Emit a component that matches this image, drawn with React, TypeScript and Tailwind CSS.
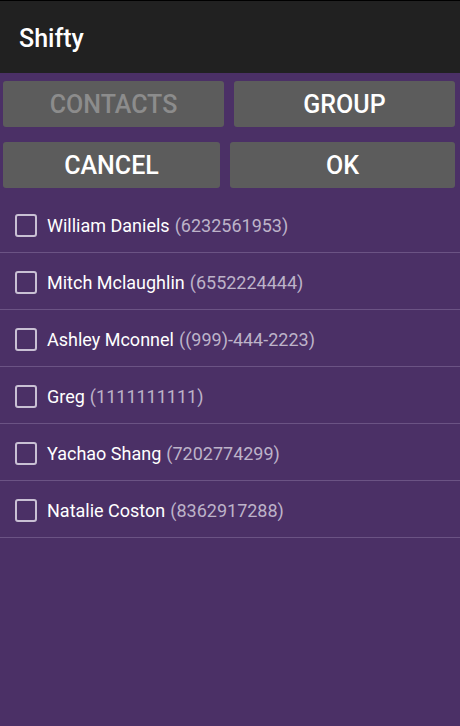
import React from "react";

const contacts = [
  { name: "William Daniels", phone: "6232561953" },
  { name: "Mitch Mclaughlin", phone: "6552224444" },
  { name: "Ashley Mconnel", phone: "(999)-444-2223" },
  { name: "Greg", phone: "1111111111" },
  { name: "Yachao Shang", phone: "7202774299" },
  { name: "Natalie Coston", phone: "8362917288" },
];

export default function App() {
  return (
    <div
      className="w-[460px] h-[726px] bg-[#4b3066] flex flex-col overflow-hidden"
      style={{ fontFamily: "Roboto, 'Liberation Sans', sans-serif" }}
    >
      <div className="h-[73px] bg-[#212121] border-t border-black flex items-center px-[19px]">
        <h1 className="text-[25px] text-white font-medium pt-[4px]">Shifty</h1>
      </div>
      <div className="flex justify-between pl-[3px] pr-[5px] mt-[8px]">
        <button className="w-[221px] h-[46px] rounded-[3px] bg-[#5c5c5c] text-[#8c8c8c] text-[25px] font-medium pt-[2px]">
          CONTACTS
        </button>
        <button className="w-[221px] h-[46px] rounded-[3px] bg-[#5c5c5c] text-white text-[25px] font-medium pt-[2px]">
          GROUP
        </button>
      </div>
      <div className="flex justify-between pl-[3px] pr-[5px] mt-[15px]">
        <button className="w-[217px] h-[46px] rounded-[3px] bg-[#5c5c5c] text-white text-[25px] font-medium pt-[2px]">
          CANCEL
        </button>
        <button className="w-[225px] h-[46px] rounded-[3px] bg-[#5c5c5c] text-white text-[25px] font-medium pt-[2px]">
          OK
        </button>
      </div>
      <ul className="mt-[8px]">
        {contacts.map((c) => (
          <li
            key={c.name}
            className="h-[57px] flex items-center border-b border-[#6b5384] pl-[15px] pt-[2px]"
          >
            <span className="w-[22px] h-[23px] rounded-[3px] border-2 border-[#c9c0d4] mr-[10px]"></span>
            <span className="text-[18px] text-white">{c.name}</span>
            <span className="text-[18px] text-[#bdb3c9] ml-[5px]">({c.phone})</span>
          </li>
        ))}
      </ul>
    </div>
  );
}
